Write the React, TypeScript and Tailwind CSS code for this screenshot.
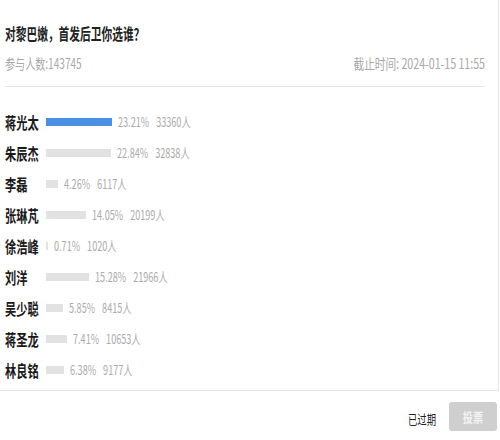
import React from "react";

const rows = [
  { name: "蒋光太", pct: 23.21, n: 33360, top: true },
  { name: "朱辰杰", pct: 22.84, n: 32838 },
  { name: "李磊", pct: 4.26, n: 6117 },
  { name: "张琳芃", pct: 14.05, n: 20199 },
  { name: "徐浩峰", pct: 0.71, n: 1020 },
  { name: "刘洋", pct: 15.28, n: 21966 },
  { name: "吴少聪", pct: 5.85, n: 8415 },
  { name: "蒋圣龙", pct: 7.41, n: 10653 },
  { name: "林良铭", pct: 6.38, n: 9177 },
];

export default function App() {
  return (
    <div
      className="w-[500px] h-[440px] bg-white overflow-hidden"
      style={{ fontFamily: '"Noto Sans CJK SC", "Noto Sans", sans-serif' }}
    >
      <div className="w-[499px] h-[391px] border-r border-b border-[#e6e6e6] pl-[5px]">
        <div className="w-[480px] h-[87px] border-b border-[#e6e6e6]">
          <div className="pt-[23px] h-[43px] leading-[20px]">
            <span className="inline-block whitespace-nowrap origin-left scale-x-[0.67] text-[16px] font-bold text-[#222]">
              对黎巴嫩，首发后卫你选谁？
            </span>
          </div>
          <div className="mt-[10px] h-[20px] flex justify-between items-center leading-[20px] text-[14px] text-[#a8a8a8]">
            <span className="inline-block whitespace-nowrap origin-left scale-x-[0.72]">
              参与人数:143745
            </span>
            <span className="inline-block whitespace-nowrap origin-right scale-x-[0.76]">
              截止时间: 2024-01-15 11:55
            </span>
          </div>
        </div>
        <div className="pt-[19px] flex flex-col">
          {rows.map((r) => (
            <div key={r.name} className="h-[31px] flex items-center">
              <div className="w-[41px] shrink-0 leading-[20px]">
                <span className="inline-block whitespace-nowrap origin-left scale-x-[0.7] text-[16px] font-bold text-[#1a1a1a]">
                  {r.name}
                </span>
              </div>
              <div
                className={`h-[8px] shrink-0 mr-[6px] ${r.top ? "bg-[#4a8fe6]" : "bg-[#e2e2e2]"}`}
                style={{ width: `${Math.max(2, Math.round(r.pct * 2.84))}px` }}
              />
              <span className="inline-block whitespace-nowrap origin-left scale-x-[0.7] text-[13px] leading-[20px] text-[#ababab]">
                {r.pct.toFixed(2)}%<span className="inline-block w-[10px]" />
                {r.n}人
              </span>
            </div>
          ))}
        </div>
      </div>
      <div className="h-[49px] pt-[2px] pr-[3px] flex items-center justify-end gap-[13px]">
        <span className="inline-block w-[28px] whitespace-nowrap">
          <span className="inline-block origin-left scale-x-[0.72] text-[13px] leading-[20px] text-[#222]">
            已过期
          </span>
        </span>
        <div className="w-[48px] h-[29px] rounded-[3px] bg-[#cfcfcf] flex items-center justify-center">
          <span className="inline-block scale-x-[0.78] text-[13px] font-bold leading-[16px] text-[#f4f4f4]">
            投票
          </span>
        </div>
      </div>
    </div>
  );
}
